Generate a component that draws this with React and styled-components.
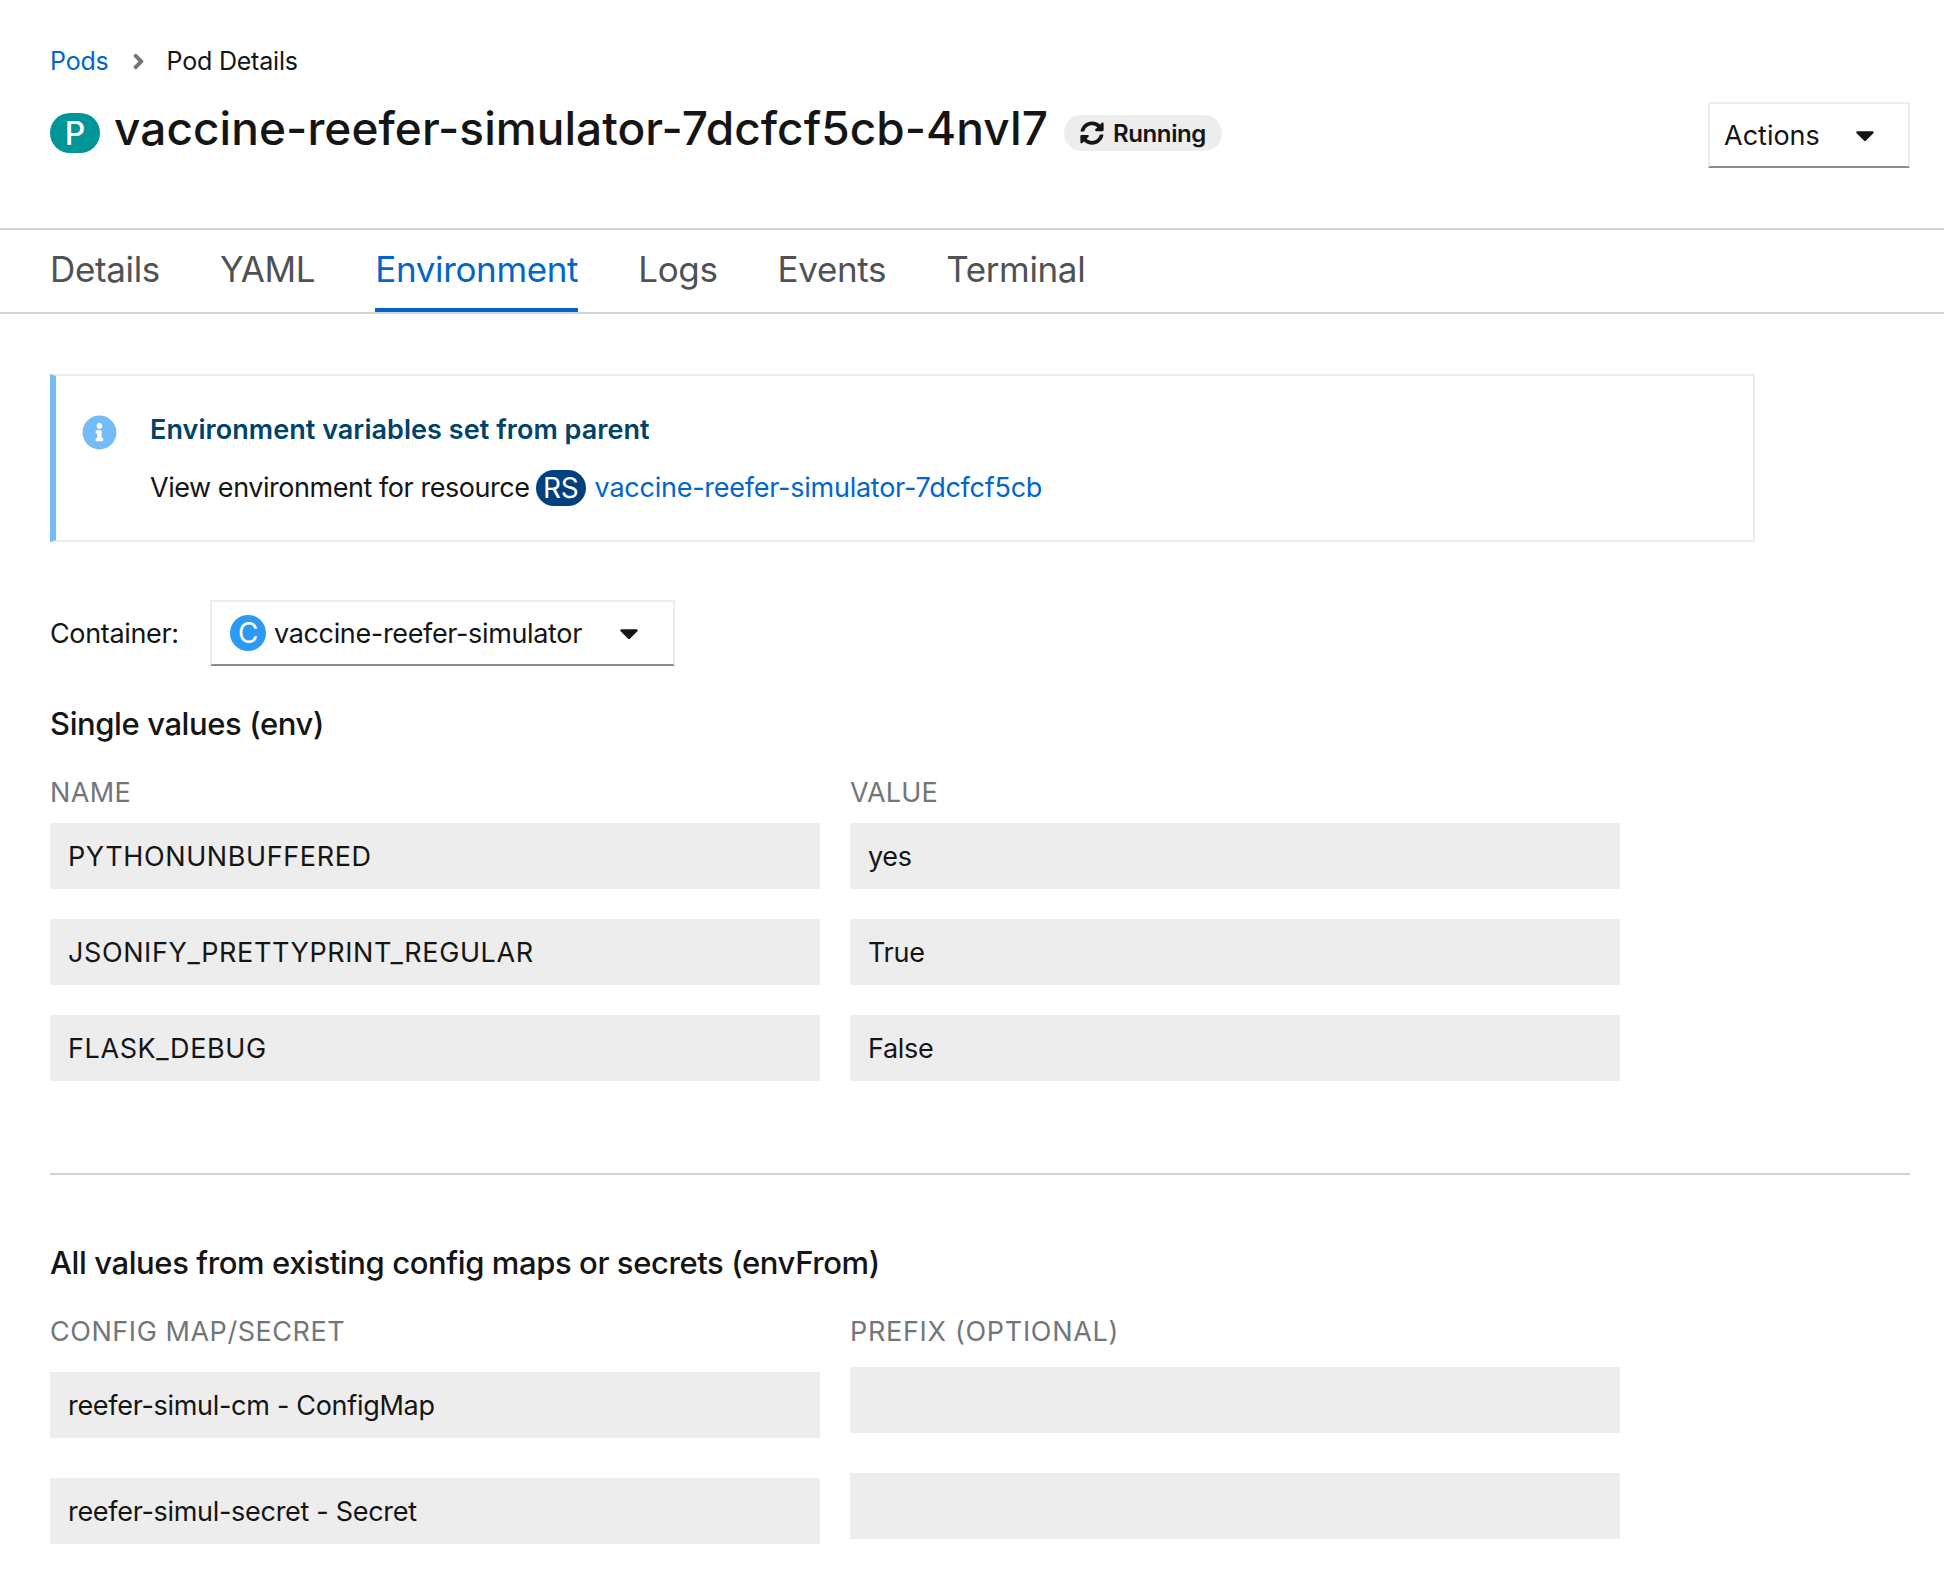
import React from "react";
import styled, { createGlobalStyle } from "styled-components";
import { FaSyncAlt, FaInfoCircle, FaCaretDown, FaAngleRight } from "react-icons/fa";

const Global = createGlobalStyle`
  html, body { margin: 0; padding: 0; background: #fff; }
  body { font-family: "Inter", "Liberation Sans", sans-serif; color: #151515; font-size: 25px; }
  * { box-sizing: border-box; }
`;

const Page = styled.div`
  width: 1944px;
  height: 1586px;
  overflow: hidden;
`;
const Header = styled.header`
  height: 228px;
  padding: 44px 34px 0 50px;
`;
const Breadcrumb = styled.nav`
  display: flex;
  align-items: center;
  height: 34px;
  font-size: 25px;
  letter-spacing: -0.2px;
`;
const Crumb = styled.span`
  color: ${(p) => (p.$link ? "#0066cc" : "#151515")};
`;
const CrumbSep = styled.span`
  display: flex;
  color: #72767b;
  margin: 0 16px 0 17px;
  font-size: 25px;
`;
const TitleRow = styled.div`
  display: flex;
  align-items: flex-start;
  justify-content: space-between;
  margin-top: 24px;
`;
const TitleLeft = styled.div`
  display: flex;
  align-items: center;
  height: 52px;
`;
const ResourceBadge = styled.span`
  display: inline-flex;
  align-items: center;
  justify-content: center;
  flex: none;
  width: ${(p) => p.$w}px;
  height: ${(p) => p.$h}px;
  margin-top: ${(p) => p.$mt || 0}px;
  border-radius: ${(p) => p.$h / 2}px;
  background: ${(p) => p.$bg};
  color: #fff;
  font-size: ${(p) => p.$fs}px;
  font-weight: ${(p) => p.$fw || 400};
`;
const Title = styled.h1`
  margin: 0 0 0 14px;
  font-size: 46px;
  font-weight: 500;
  line-height: 52px;
  letter-spacing: 0.06px;
`;
const StatusPill = styled.span`
  display: inline-flex;
  align-items: center;
  gap: 9px;
  height: 36px;
  margin: 10px 0 0 16px;
  padding: 0 16px;
  border-radius: 18px;
  background: #ededed;
  font-size: 24px;
  font-weight: 600;
  letter-spacing: -0.4px;
`;
const Dropdown = styled.div`
  display: flex;
  align-items: center;
  justify-content: space-between;
  width: ${(p) => p.$w}px;
  height: 66px;
  padding: 0 ${(p) => p.$pr}px 0 ${(p) => p.$pl}px;
  border: 2px solid #ededed;
  border-bottom: 2px solid #8a8d90;
  font-size: 27px;
`;
const Inline = styled.span`
  display: inline-flex;
  align-items: center;
  gap: ${(p) => p.$gap || 0}px;
`;
const Tabs = styled.nav`
  display: flex;
  gap: 60px;
  height: 86px;
  padding: 0 50px;
  border-top: 2px solid #d2d2d2;
  border-bottom: 2px solid #d2d2d2;
`;
const Tab = styled.span`
  display: flex;
  align-items: center;
  height: 82px;
  font-size: 35px;
  letter-spacing: -0.35px;
  color: ${(p) => (p.$active ? "#0066cc" : "#4f5255")};
  border-bottom: 4px solid ${(p) => (p.$active ? "#0066cc" : "transparent")};
`;
const Main = styled.main`
  padding: 60px 34px 0 50px;
`;
const Alert = styled.section`
  display: flex;
  width: 1705px;
  height: 168px;
  padding: 38px 0 0 26px;
  border: 2px solid #ededed;
  border-left: 6px solid #73bcf7;
`;
const AlertIcon = styled.span`
  display: flex;
  align-self: flex-start;
  color: #73bcf7;
  font-size: 35px;
  margin: 1px 33px 0 0;
`;
const AlertBody = styled.div`
  display: flex;
  flex-direction: column;
`;
const AlertTitle = styled.div`
  color: #004368;
  font-weight: 600;
  font-size: 27px;
  line-height: 32px;
  letter-spacing: 0.05px;
`;
const AlertText = styled.div`
  display: flex;
  align-items: center;
  gap: 6px;
  margin-top: 24px;
  font-size: 27px;
  line-height: 36px;
  letter-spacing: -0.45px;
`;
const Link = styled.span`
  color: #0066cc;
  margin-left: 3px;
  letter-spacing: -0.25px;
`;
const ContainerRow = styled.div`
  display: flex;
  align-items: center;
  margin-top: 58px;
  font-size: 27px;
  letter-spacing: -0.35px;
`;
const ContainerLabel = styled.span`
  width: 160px;
`;
const Heading = styled.h2`
  margin: ${(p) => p.$mt}px 0 0;
  font-size: 31px;
  font-weight: 500;
  line-height: 40px;
  letter-spacing: -0.4px;
`;
const Grid = styled.div`
  display: grid;
  grid-template-columns: 770px 770px;
  column-gap: 30px;
  margin-top: 33px;
`;
const ColLabel = styled.div`
  color: #72767b;
  font-size: 27px;
  line-height: 32px;
  letter-spacing: ${(p) => p.$ls}px;
`;
const Column = styled.div`
  display: flex;
  flex-direction: column;
  gap: ${(p) => p.$gap}px;
  margin-top: ${(p) => p.$mt}px;
`;
const Field = styled.div`
  display: flex;
  align-items: center;
  height: 66px;
  padding: 0 18px;
  background: #ededed;
  font-size: 27px;
  letter-spacing: ${(p) => (p.$upper ? "0.6px" : "-0.3px")};
`;
const Divider = styled.hr`
  margin: 92px 0 0;
  height: 2px;
  border: none;
  background: #d2d2d2;
`;

export default function App() {
  return (
    <Page>
      <Global />
      <Header>
        <Breadcrumb>
          <Crumb $link>Pods</Crumb>
          <CrumbSep><FaAngleRight /></CrumbSep>
          <Crumb>Pod Details</Crumb>
        </Breadcrumb>
        <TitleRow>
          <TitleLeft>
            <ResourceBadge $w={50} $h={40} $mt={10} $bg="#009596" $fs={32} $fw={500}>P</ResourceBadge>
            <Title>vaccine-reefer-simulator-7dcfcf5cb-4nvl7</Title>
            <StatusPill><FaSyncAlt size={24} />Running</StatusPill>
          </TitleLeft>
          <Dropdown $w={202} $pl={14} $pr={28}>
            Actions
            <FaCaretDown size={30} />
          </Dropdown>
        </TitleRow>
      </Header>
      <Tabs>
        <Tab>Details</Tab>
        <Tab>YAML</Tab>
        <Tab $active>Environment</Tab>
        <Tab>Logs</Tab>
        <Tab>Events</Tab>
        <Tab>Terminal</Tab>
      </Tabs>
      <Main>
        <Alert>
          <AlertIcon><FaInfoCircle /></AlertIcon>
          <AlertBody>
            <AlertTitle>Environment variables set from parent</AlertTitle>
            <AlertText>
              <span>View environment for resource</span>
              <ResourceBadge $w={50} $h={36} $bg="#004080" $fs={28}>RS</ResourceBadge>
              <Link>vaccine-reefer-simulator-7dcfcf5cb</Link>
            </AlertText>
          </AlertBody>
        </Alert>
        <ContainerRow>
          <ContainerLabel>Container:</ContainerLabel>
          <Dropdown $w={465} $pl={18} $pr={29}>
            <Inline $gap={8}>
              <ResourceBadge $w={36} $h={36} $bg="#2b9af3" $fs={28}>C</ResourceBadge>
              vaccine-reefer-simulator
            </Inline>
            <FaCaretDown size={30} />
          </Dropdown>
        </ContainerRow>
        <Heading $mt={38}>Single values (env)</Heading>
        <Grid>
          <div>
            <ColLabel $ls={0.4}>NAME</ColLabel>
            <Column $gap={30} $mt={14}>
              <Field $upper>PYTHONUNBUFFERED</Field>
              <Field $upper>JSONIFY_PRETTYPRINT_REGULAR</Field>
              <Field $upper>FLASK_DEBUG</Field>
            </Column>
          </div>
          <div>
            <ColLabel $ls={0.2}>VALUE</ColLabel>
            <Column $gap={30} $mt={14}>
              <Field>yes</Field>
              <Field>True</Field>
              <Field>False</Field>
            </Column>
          </div>
        </Grid>
        <Divider />
        <Heading $mt={68}>All values from existing config maps or secrets (envFrom)</Heading>
        <Grid>
          <div>
            <ColLabel $ls={0.55}>CONFIG MAP/SECRET</ColLabel>
            <Column $gap={40} $mt={24}>
              <Field>reefer-simul-cm - ConfigMap</Field>
              <Field>reefer-simul-secret - Secret</Field>
            </Column>
          </div>
          <div>
            <ColLabel $ls={0.7}>PREFIX (OPTIONAL)</ColLabel>
            <Column $gap={40} $mt={19}>
              <Field />
              <Field />
            </Column>
          </div>
        </Grid>
      </Main>
    </Page>
  );
}
